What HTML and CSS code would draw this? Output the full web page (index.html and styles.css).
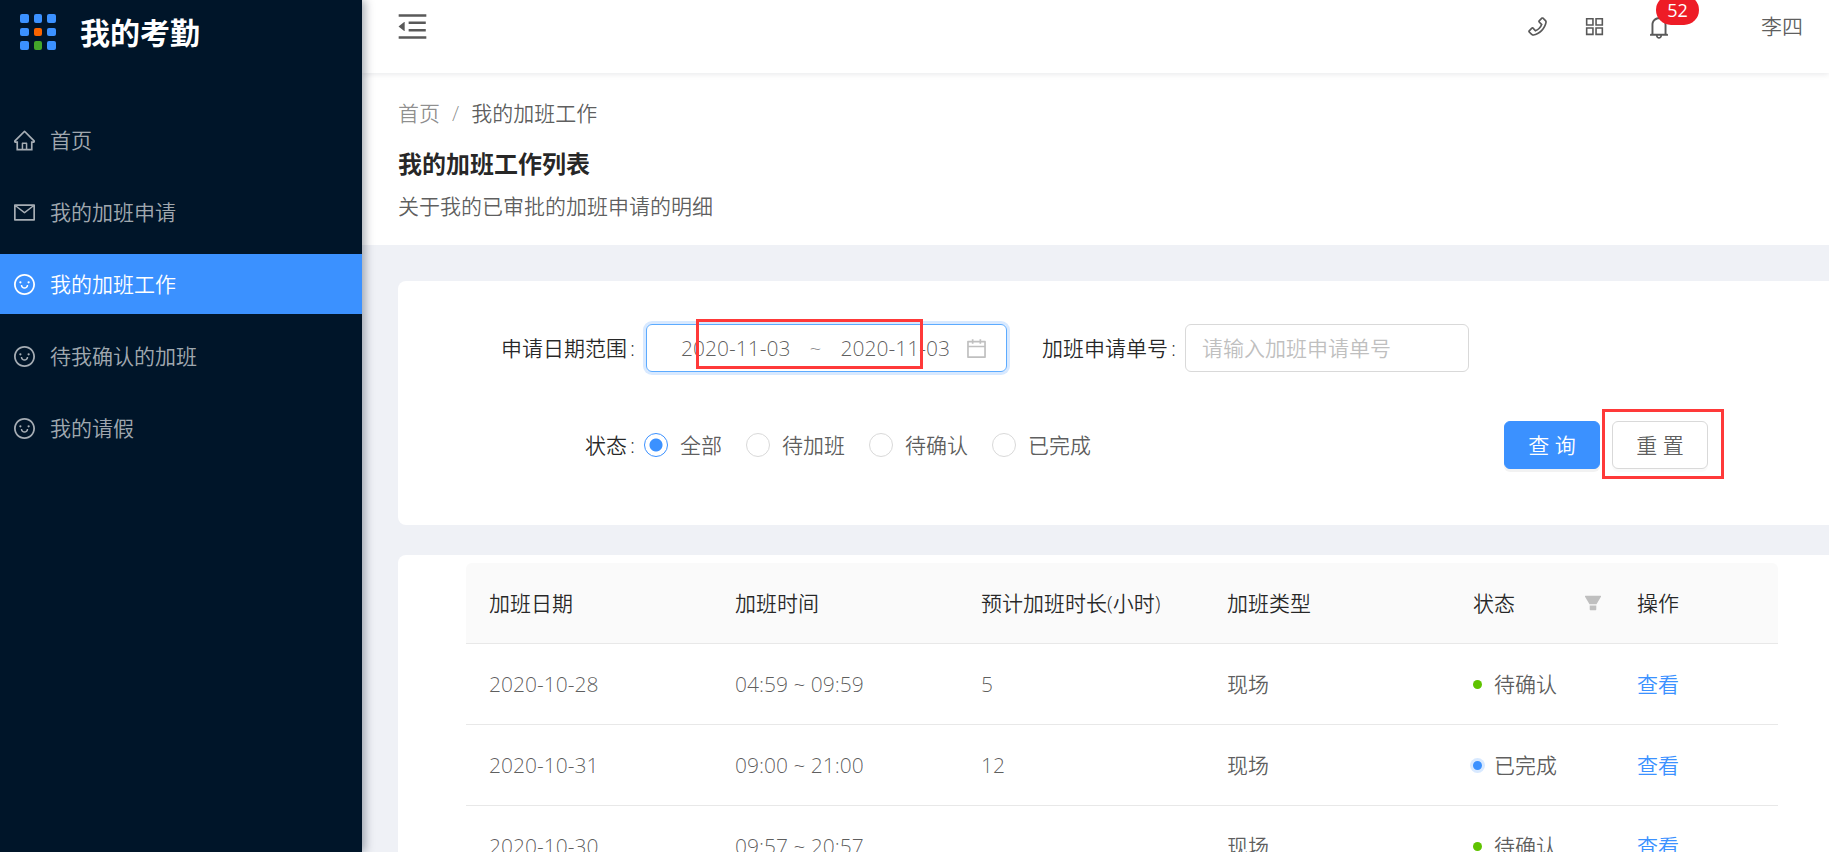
FILE: index.html
```
<!DOCTYPE html>
<html lang="zh-CN">
<head>
    <meta charset="UTF-8">
    <meta name="viewport" content="width=device-width, initial-scale=1.0">
    <title>我的考勤</title>
    <link rel="stylesheet" href="styles.css">
</head>
<body>
    <!-- Shared icons -->
    <svg class="sprite" aria-hidden="true">
        <symbol id="icon-smile" viewBox="64 64 896 896">
            <path d="M288 421a48 48 0 1096 0 48 48 0 10-96 0zm352 0a48 48 0 1096 0 48 48 0 10-96 0zM512 64C264.6 64 64 264.6 64 512s200.6 448 448 448 448-200.6 448-448S759.4 64 512 64zm263 711c-34.2 34.2-74 61-118.3 79.8C611 874.2 562.3 884 512 884c-50.3 0-99-9.8-144.8-29.2A370.4 370.4 0 01248.9 775c-34.2-34.2-61-74-79.8-118.3C149.8 611 140 562.3 140 512s9.8-99 29.2-144.8A370.4 370.4 0 01249 248.9c34.2-34.2 74-61 118.3-79.8C413 149.8 461.7 140 512 140c50.3 0 99 9.8 144.8 29.2A370.4 370.4 0 01775.1 249c34.2 34.2 61 74 79.8 118.3C874.2 413 884 461.7 884 512s-9.8 99-29.2 144.8A368.89 368.89 0 01775 775zM664 533h-48.1c-4.2 0-7.8 3.2-8.1 7.4C604 589.9 562.5 629 512 629s-92.1-39.1-95.8-88.6c-.3-4.2-3.9-7.4-8.1-7.4H360a8 8 0 00-8 8.4c4.4 84.3 74.5 151.6 160 151.6s155.6-67.3 160-151.6a8 8 0 00-8-8.4z"/>
        </symbol>
    </svg>

    <div class="layout">
        <!-- Sidebar -->
        <aside class="sidebar">
            <div class="logo">
                <svg class="logo-mark" viewBox="0 0 36 36" aria-hidden="true">
                    <g fill="#3b91ff">
                        <rect x="0" y="0" width="9" height="9" rx="2"/>
                        <rect x="14" y="0" width="8" height="9" rx="2"/>
                        <rect x="27" y="0" width="9" height="9" rx="2"/>
                        <rect x="0" y="14" width="9" height="8" rx="2"/>
                        <rect x="27" y="14" width="9" height="8" rx="2"/>
                        <rect x="0" y="27" width="9" height="9" rx="2"/>
                        <rect x="27" y="27" width="9" height="9" rx="2"/>
                    </g>
                    <rect x="14" y="14" width="8" height="8" rx="2" fill="#fa6400"/>
                    <rect x="14" y="27" width="8" height="9" rx="2" fill="#43a62a"/>
                </svg>
                <span>我的考勤</span>
            </div>
            <nav class="menu">
                <a class="menu-item" href="#">
                    <svg class="icon" viewBox="64 64 896 896"><path d="M946.5 505L560.1 118.8l-25.9-25.9a31.5 31.5 0 00-44.4 0L77.5 505a63.9 63.9 0 00-18.8 46c.4 35.2 29.7 63.3 64.9 63.3h42.5V940h691.8V614.3h43.4c17.1 0 33.2-6.7 45.3-18.8a63.6 63.6 0 0018.7-45.3c0-17-6.7-33.1-18.8-45.2zM568 868H456V664h112v204zm217.9-325.7V868H632V640c0-22.1-17.9-40-40-40H432c-22.1 0-40 17.9-40 40v228H238.1V542.3h-96l370-369.7 23.1 23.1L882 542.3h-96.1z"/></svg>
                    <span>首页</span>
                </a>
                <a class="menu-item" href="#">
                    <svg class="icon" viewBox="64 64 896 896"><path d="M928 160H96c-17.7 0-32 14.3-32 32v640c0 17.7 14.3 32 32 32h832c17.7 0 32-14.3 32-32V192c0-17.7-14.3-32-32-32zm-40 110.8V792H136V270.8l-27.6-21.5 39.3-50.5 42.8 33.3h643.1l42.8-33.3 39.3 50.5-27.7 21.5zM833.6 232L512 482 190.4 232l-42.8-33.3-39.3 50.5 27.6 21.5 341.6 265.6a55.99 55.99 0 0068.7 0L888 270.8l27.6-21.5-39.3-50.5-42.7 33.2z"/></svg>
                    <span>我的加班申请</span>
                </a>
                <a class="menu-item active" href="#">
                    <svg class="icon"><use href="#icon-smile"/></svg>
                    <span>我的加班工作</span>
                </a>
                <a class="menu-item" href="#">
                    <svg class="icon"><use href="#icon-smile"/></svg>
                    <span>待我确认的加班</span>
                </a>
                <a class="menu-item" href="#">
                    <svg class="icon"><use href="#icon-smile"/></svg>
                    <span>我的请假</span>
                </a>
            </nav>
        </aside>

        <div class="main">
            <!-- Top bar -->
            <header class="topbar">
                <button class="icon-btn" type="button" aria-label="收起菜单">
                    <svg class="icon icon-fold" viewBox="64 64 896 896"><path d="M408 442h480c4.4 0 8-3.6 8-8v-56c0-4.4-3.6-8-8-8H408c-4.4 0-8 3.6-8 8v56c0 4.4 3.6 8 8 8zm-8 204c0 4.4 3.6 8 8 8h480c4.4 0 8-3.6 8-8v-56c0-4.4-3.6-8-8-8H408c-4.4 0-8 3.6-8 8v56zm504-486H120c-4.4 0-8 3.6-8 8v56c0 4.4 3.6 8 8 8h784c4.4 0 8-3.6 8-8v-56c0-4.4-3.6-8-8-8zm0 632H120c-4.4 0-8 3.6-8 8v56c0 4.4 3.6 8 8 8h784c4.4 0 8-3.6 8-8v-56c0-4.4-3.6-8-8-8zM115.4 518.9L271.7 642c5.8 4.6 14.4.5 14.4-6.9V388.9c0-7.4-8.5-11.5-14.4-6.9L115.4 505.1a8.74 8.74 0 000 13.8z"/></svg>
                </button>
                <div class="tools">
                    <button class="icon-btn" type="button" aria-label="电话">
                        <svg class="icon" viewBox="64 64 896 896"><path d="M877.1 238.7L770.6 132.3c-13-13-30.4-20.3-48.8-20.3s-35.8 7.2-48.8 20.3L558.3 246.8c-13 13-20.3 30.5-20.3 48.9 0 18.5 7.2 35.8 20.3 48.9l89.6 89.7a405.46 405.46 0 01-86.4 127.3c-36.7 36.9-79.6 66-127.2 86.6l-89.6-89.7c-13-13-30.4-20.3-48.8-20.3a68.2 68.2 0 00-48.8 20.3L132.3 673c-13 13-20.3 30.5-20.3 48.9 0 18.5 7.2 35.8 20.3 48.9l106.4 106.4c22.2 22.2 52.8 34.9 84.2 34.9 6.5 0 12.8-.5 19.2-1.6 132.4-21.8 263.8-92.3 369.9-198.3C818 606 888.4 474.6 910.4 342.1c6.3-37.6-6.3-76.3-33.3-103.4zm-37.6 91.5c-19.5 117.9-82.9 235.5-178.4 331s-213 158.9-330.9 178.4c-14.8 2.5-30-2.5-40.8-13.2L184.9 721.9 295.7 611l119.8 120 .9.9 21.6-8a481.29 481.29 0 00285.7-285.8l8-21.6-120.8-120.7 110.8-110.9 104.5 104.5c10.8 10.8 15.8 26 13.3 40.8z"/></svg>
                    </button>
                    <button class="icon-btn" type="button" aria-label="应用">
                        <svg class="icon" viewBox="64 64 896 896"><path fill-rule="evenodd" d="M144 144h336v336H144zM212 212v200h200V212zM544 144h336v336H544zM612 212v200h200V212zM144 544h336v336H144zM212 612v200h200V612zM544 544h336v336H544zM612 612v200h200V612z"/></svg>
                    </button>
                    <button class="icon-btn notice" type="button" aria-label="通知">
                        <svg class="icon icon-bell" viewBox="64 64 896 896"><path d="M816 768h-24V428c0-141.1-104.3-257.7-240-277.1V112c0-22.1-17.9-40-40-40s-40 17.9-40 40v38.9c-135.7 19.4-240 136-240 277.1v340h-24c-17.7 0-32 14.3-32 32v32c0 4.4 3.6 8 8 8h216c0 61.8 50.2 112 112 112s112-50.2 112-112h216c4.4 0 8-3.6 8-8v-32c0-17.7-14.3-32-32-32zM512 888c-26.5 0-48-21.5-48-48h96c0 26.5-21.5 48-48 48zM304 768V428c0-55.6 21.6-107.8 60.9-147.1S456.4 220 512 220c55.6 0 107.8 21.6 147.1 60.9S720 372.4 720 428v340H304z"/></svg>
                        <span class="badge">52</span>
                    </button>
                    <span class="user">李四</span>
                </div>
            </header>

            <!-- Page title -->
            <div class="page-header">
                <nav class="breadcrumb">
                    <a href="#">首页</a><span class="sep">/</span><span class="current">我的加班工作</span>
                </nav>
                <h1>我的加班工作列表</h1>
                <p>关于我的已审批的加班申请的明细</p>
            </div>

            <div class="content">
                <!-- Search form -->
                <form class="card search-form">
                    <label class="label" for="date-start">申请日期范围</label>
                    <div class="date-range">
                        <input type="text" id="date-start" value="2020-11-03">
                        <span class="tilde">~</span>
                        <input type="text" id="date-end" value="2020-11-03" aria-label="结束日期">
                        <svg class="icon" viewBox="64 64 896 896"><path d="M880 184H712v-64c0-4.4-3.6-8-8-8h-56c-4.4 0-8 3.6-8 8v64H384v-64c0-4.4-3.6-8-8-8h-56c-4.4 0-8 3.6-8 8v64H144c-17.7 0-32 14.3-32 32v664c0 17.7 14.3 32 32 32h736c17.7 0 32-14.3 32-32V216c0-17.7-14.3-32-32-32zm-40 656H184V460h656v380zM184 392V256h128v48c0 4.4 3.6 8 8 8h56c4.4 0 8-3.6 8-8v-48h256v48c0 4.4 3.6 8 8 8h56c4.4 0 8-3.6 8-8v-48h128v136H184z"/></svg>
                        <span class="mark mark-date"></span>
                    </div>
                    <label class="label" for="order-no">加班申请单号</label>
                    <input class="text-input" type="text" id="order-no" placeholder="请输入加班申请单号">

                    <span class="label label-status" id="status-label">状态</span>
                    <div class="radios" role="radiogroup" aria-labelledby="status-label">
                        <label><input type="radio" name="status" checked>全部</label>
                        <label><input type="radio" name="status">待加班</label>
                        <label><input type="radio" name="status">待确认</label>
                        <label><input type="radio" name="status">已完成</label>
                    </div>
                    <div class="actions">
                        <button class="btn btn-primary" type="button">查 询</button>
                        <div class="reset">
                            <button class="btn" type="reset">重 置</button>
                            <span class="mark mark-reset"></span>
                        </div>
                    </div>
                </form>

                <!-- Overtime list -->
                <div class="card list">
                    <table>
                        <colgroup>
                            <col class="col-wide"><col class="col-wide"><col class="col-wide"><col class="col-wide"><col class="col-narrow"><col>
                        </colgroup>
                        <thead>
                            <tr>
                                <th>加班日期</th>
                                <th>加班时间</th>
                                <th>预计加班时长(小时)</th>
                                <th>加班类型</th>
                                <th class="th-filter">
                                    <div class="filter">
                                        <span>状态</span>
                                        <svg class="icon icon-filter" viewBox="64 64 896 896"><path d="M349 838c0 17.7 14.2 32 31.8 32h262.4c17.6 0 31.8-14.3 31.8-32V642H349v196zm531.1-684H143.9c-24.5 0-39.8 26.7-27.5 48l221.3 376h348.8l221.3-376c12.1-21.3-3.2-48-27.7-48z"/></svg>
                                    </div>
                                </th>
                                <th>操作</th>
                            </tr>
                        </thead>
                        <tbody>
                            <tr>
                                <td>2020-10-28</td>
                                <td>04:59 ~ 09:59</td>
                                <td>5</td>
                                <td>现场</td>
                                <td><span class="status pending">待确认</span></td>
                                <td><a href="#">查看</a></td>
                            </tr>
                            <tr>
                                <td>2020-10-31</td>
                                <td>09:00 ~ 21:00</td>
                                <td>12</td>
                                <td>现场</td>
                                <td><span class="status done">已完成</span></td>
                                <td><a href="#">查看</a></td>
                            </tr>
                            <tr>
                                <td>2020-10-30</td>
                                <td>09:57 ~ 20:57</td>
                                <td></td>
                                <td>现场</td>
                                <td><span class="status pending">待确认</span></td>
                                <td><a href="#">查看</a></td>
                            </tr>
                        </tbody>
                    </table>
                </div>
            </div>
        </div>
    </div>
</body>
</html>
```
FILE: styles.css
```
* {
    box-sizing: border-box;
}
body {
    margin: 0;
    font-family: "Open Sans", "Noto Sans CJK SC", sans-serif;
    font-size: 21px;
    font-weight: 350;
    line-height: 33px;
    color: rgba(0, 0, 0, 0.65);
    background: #eff1f6;
}
a {
    color: #3b91ff;
    text-decoration: none;
}
button, input {
    font: inherit;
    color: inherit;
}
.sprite {
    display: none;
}
.icon {
    display: block;
    flex: none;
    width: 21px;
    height: 21px;
    fill: currentColor;
}
.layout {
    display: flex;
    height: 100vh;
    overflow: hidden;
}

/* Sidebar */
.sidebar {
    position: relative;
    z-index: 1;
    flex: none;
    width: 362px;
    background: #001529;
    box-shadow: 3px 0 9px rgba(0, 21, 41, 0.35);
}
.logo {
    display: flex;
    align-items: center;
    gap: 24px;
    height: 64px;
    padding-left: 20px;
    color: #fff;
    font-size: 30px;
    font-weight: 700;
}
.logo-mark {
    width: 36px;
    height: 36px;
}
.menu {
    display: flex;
    flex-direction: column;
    gap: 12px;
    padding-top: 46px;
}
.menu-item {
    display: flex;
    align-items: center;
    gap: 15px;
    height: 60px;
    padding-left: 14px;
    color: rgba(255, 255, 255, 0.65);
}
.menu-item.active {
    color: #fff;
    background: #3b91ff;
}

/* Top bar */
.main {
    flex: 1;
    min-width: 0;
}
.topbar {
    position: relative;
    display: flex;
    align-items: center;
    justify-content: space-between;
    height: 73px;
    padding: 0 26px 20px 35px;
    background: #fff;
    box-shadow: 0 1px 6px rgba(0, 21, 41, 0.1);
}
.icon-btn {
    padding: 0;
    border: 0;
    background: none;
}
.icon-fold {
    width: 31px;
    height: 31px;
}
.icon-bell {
    width: 24px;
    height: 24px;
}
.tools {
    display: flex;
    align-items: center;
    gap: 36px;
}
.notice {
    position: relative;
    margin: 0 54px 0 6px;
}
.badge {
    position: absolute;
    left: 9px;
    bottom: 14px;
    width: 43px;
    height: 30px;
    border-radius: 15px;
    background: #ee1c26;
    color: #fff;
    font-size: 18px;
    font-weight: 400;
    line-height: 30px;
}

/* Page title */
.page-header {
    padding: 24px 36px 22px;
    background: #fff;
}
.breadcrumb a, .breadcrumb .sep {
    color: rgba(0, 0, 0, 0.45);
}
.breadcrumb .sep {
    margin: 0 12px;
}
.page-header h1 {
    margin: 16px 0 8px;
    font-size: 24px;
    font-weight: 700;
    line-height: 36px;
    color: rgba(0, 0, 0, 0.85);
}
.page-header p {
    margin: 0;
}

/* Cards */
.content {
    padding: 36px 0 0 36px;
}
.card {
    background: #fff;
    border-radius: 8px 0 0 8px;
}

/* Search form */
.search-form {
    display: grid;
    grid-template-columns: 246fr 363fr 178fr 284fr 360fr;
    align-items: center;
    row-gap: 49px;
    padding: 43px 0 56px;
}
.label {
    text-align: right;
    color: rgba(0, 0, 0, 0.85);
}
.label::after {
    content: ":";
    margin: 0 9px 0 3px;
}
.label-status {
    grid-column: 1;
}
.date-range {
    position: relative;
    display: flex;
    align-items: center;
    height: 48px;
    margin-left: 2px;
    padding: 0 19px 0 18px;
    border: 1px solid #5cabff;
    border-radius: 6px;
    box-shadow: 0 0 0 3px rgba(59, 145, 255, 0.2);
}
.date-range input {
    flex: 1;
    width: 0;
    padding: 0;
    border: 0;
    outline: 0;
    background: none;
    text-align: center;
}
.date-range .icon {
    color: rgba(0, 0, 0, 0.25);
}
.tilde {
    width: 18px;
    text-align: center;
    color: rgba(0, 0, 0, 0.45);
}
.text-input {
    width: 100%;
    height: 48px;
    padding: 0 16px;
    border: 1px solid #d9d9d9;
    border-radius: 6px;
}
.text-input::placeholder {
    color: #bfbfbf;
}
.radios {
    grid-column: 2 / 4;
    display: flex;
    gap: 24px;
    white-space: nowrap;
}
.radios label {
    display: flex;
    align-items: center;
    gap: 12px;
}
.radios input {
    appearance: none;
    width: 24px;
    height: 24px;
    margin: 0;
    border: 1px solid #d9d9d9;
    border-radius: 50%;
}
.radios input:checked {
    border-color: #3b91ff;
    background: radial-gradient(circle, #3b91ff 6px, #fff 7px);
}
.actions {
    grid-column: 4 / 6;
    display: flex;
    justify-content: flex-end;
    gap: 12px;
    padding-right: 121px;
}
.btn {
    display: block;
    width: 96px;
    height: 48px;
    padding: 0;
    border: 1px solid #d9d9d9;
    border-radius: 6px;
    background: #fff;
    box-shadow: 0 3px 0 rgba(0, 0, 0, 0.02);
}
.btn-primary {
    border-color: #3b91ff;
    background: #3b91ff;
    box-shadow: 0 3px 0 rgba(0, 0, 0, 0.05);
    color: #fff;
}
.reset {
    position: relative;
}

/* Red frames over the fields being explained */
.mark {
    position: absolute;
    border: 3px solid #ff3939;
    pointer-events: none;
}
.mark-date {
    left: 49px;
    top: -6px;
    width: 227px;
    height: 50px;
}
.mark-reset {
    left: -10px;
    top: -12px;
    width: 122px;
    height: 70px;
}

/* Overtime list */
.list {
    margin-top: 30px;
    padding: 8px 51px 0 68px;
}
table {
    width: 100%;
    table-layout: fixed;
    border-collapse: separate;
    border-spacing: 0;
}
.col-wide {
    width: 18.75%;
}
.col-narrow {
    width: 12.5%;
}
th, td {
    height: 81px;
    padding: 0 23px;
    border-bottom: 1px solid #e8e8e8;
    text-align: left;
    white-space: nowrap;
}
th {
    background: #fafafa;
    color: rgba(0, 0, 0, 0.85);
    font-weight: 350;
}
th:first-child {
    border-top-left-radius: 6px;
}
th:last-child {
    border-top-right-radius: 6px;
}
.th-filter {
    padding-right: 12px;
}
.filter {
    display: flex;
    align-items: center;
    justify-content: space-between;
}
.icon-filter {
    width: 18px;
    height: 18px;
    color: #bfbfbf;
}
.status {
    display: flex;
    align-items: center;
    gap: 12px;
}
.status::before {
    content: "";
    width: 9px;
    height: 9px;
    border-radius: 50%;
    background: #5fc300;
}
.status.done::before {
    background: #3b91ff;
    box-shadow: 0 0 0 3px rgba(59, 145, 255, 0.2);
}
```
